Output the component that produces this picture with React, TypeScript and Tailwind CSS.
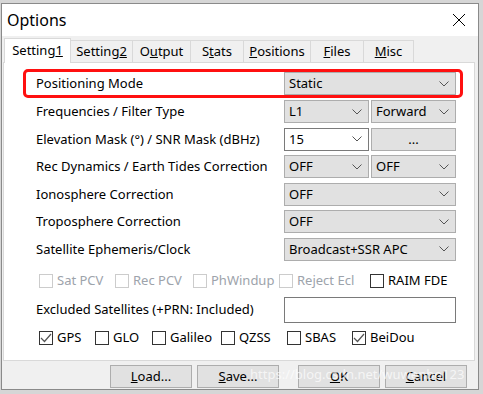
import React from 'react';

const FONT = { fontFamily: '"Noto Sans", "Open Sans", sans-serif' };

function Chevron() {
  return (
    <svg width="10" height="6" viewBox="0 0 10 6" className="shrink-0">
      <path d="M0.5 0.5 L5 5 L9.5 0.5" fill="none" stroke="#555" strokeWidth="1" />
    </svg>
  );
}

function Combo({ value, width, white }: { value: string; width: string; white?: boolean }) {
  return (
    <div
      className={`${width} h-[23px] flex items-center justify-between pl-[4px] pr-[6px] border ${
        white ? 'bg-white border-[#7a7a7a]' : 'bg-[#e1e1e1] border-[#adadad]'
      }`}
    >
      <span>{value}</span>
      <Chevron />
    </div>
  );
}

function Box({ checked, disabled }: { checked?: boolean; disabled?: boolean }) {
  return (
    <span
      className={`w-[14px] h-[14px] border flex items-center justify-center shrink-0 bg-white ${
        disabled ? 'border-[#cccccc]' : 'border-[#333]'
      }`}
    >
      {checked && (
        <svg width="12" height="10" viewBox="0 0 12 10">
          <path d="M1 5 L4.5 8.5 L11 1" fill="none" stroke="#555" strokeWidth="1.2" />
        </svg>
      )}
    </span>
  );
}

function Check({ label, x, checked, disabled }: { label: string; x: string; checked?: boolean; disabled?: boolean }) {
  return (
    <div className={`absolute top-0 ${x} flex items-center gap-[4px] ${disabled ? 'text-[#9da3ab]' : 'text-black'}`}>
      <Box checked={checked} disabled={disabled} />
      <span>{label}</span>
    </div>
  );
}

function Row({ label, children }: { label: string; children: React.ReactNode }) {
  return (
    <div className="h-[27.5px] flex items-center">
      <span className="w-[248px]">{label}</span>
      <div className="flex gap-[2px]">{children}</div>
    </div>
  );
}

function Btn({ children, className }: { children: React.ReactNode; className?: string }) {
  return (
    <div className={`w-[82px] h-[23px] bg-[#e1e1e1] border border-[#adadad] flex items-center justify-center ${className ?? ''}`}>
      {children}
    </div>
  );
}

const tabs = [
  { pre: 'Setting', key: '2', post: '', w: 'w-[62px]' },
  { pre: 'O', key: 'u', post: 'tput', w: 'w-[58px]' },
  { pre: 'S', key: 't', post: 'ats', w: 'w-[53px]' },
  { pre: '', key: 'P', post: 'ositions', w: 'w-[67px]' },
  { pre: '', key: 'F', post: 'iles', w: 'w-[53px]' },
  { pre: '', key: 'M', post: 'isc', w: 'w-[50px]' },
];

export default function App() {
  return (
    <div className="w-[483px] h-[394px] bg-[#d6d6d6] overflow-hidden text-[13px] text-black relative" style={FONT}>
      <div className="ml-[1px] mt-[3px] w-[478px] h-[387px] border border-[#8a8a8a] bg-[#f0f0f0] flex flex-col">
        {/* title bar */}
        <div className="h-[32px] bg-white flex items-center justify-between pl-[5px] pr-[12px] shrink-0">
          <span className="text-[16px]">Options</span>
          <svg width="14" height="14" viewBox="0 0 14 14">
            <path d="M1 1 L13 13 M13 1 L1 13" stroke="#000" strokeWidth="1" />
          </svg>
        </div>

        {/* tabs */}
        <div className="flex items-end pl-[2px] h-[25px] mt-[1px] shrink-0">
          <div className="w-[67px] h-[25px] bg-white border border-[#d9d9d9] border-b-0 flex items-center justify-center relative z-10 -mb-[1px]">
            Setting<span className="underline">1</span>
          </div>
          {tabs.map((t) => (
            <div key={t.pre + t.key} className={`${t.w} h-[22px] bg-[#f0f0f0] border border-[#d9d9d9] border-l-0 border-b-0 flex items-center justify-center`}>
              {t.pre}
              <span className="underline">{t.key}</span>
              {t.post}
            </div>
          ))}
        </div>

        {/* panel */}
        <div className="ml-[1px] w-[472px] h-[299px] bg-white border border-[#d9d9d9] pl-[32px] pt-[6px] shrink-0">
          <div className="-ml-[13px] w-[440px] h-[29px] border-[3px] border-[#ff1010] rounded-[5px] flex items-center pl-[10px] mb-[-1px]">
            <span className="w-[248px]">Positioning Mode</span>
            <Combo value="Static" width="w-[172px]" />
          </div>
          <div className="mt-[1px]">
            <Row label="Frequencies / Filter Type">
              <Combo value="L1" width="w-[85px]" />
              <Combo value="Forward" width="w-[85px]" />
            </Row>
            <Row label="Elevation Mask (°) / SNR Mask (dBHz)">
              <Combo value="15" width="w-[85px]" white />
              <Btn className="w-[85px]">...</Btn>
            </Row>
            <Row label="Rec Dynamics / Earth Tides Correction">
              <Combo value="OFF" width="w-[85px]" />
              <Combo value="OFF" width="w-[85px]" />
            </Row>
            <Row label="Ionosphere Correction">
              <Combo value="OFF" width="w-[172px]" />
            </Row>
            <Row label="Troposphere Correction">
              <Combo value="OFF" width="w-[172px]" />
            </Row>
            <Row label="Satellite Ephemeris/Clock">
              <Combo value="Broadcast+SSR APC" width="w-[172px]" />
            </Row>
          </div>

          <div className="relative h-[16px] mt-[8px] -ml-[32px]">
            <Check label="Sat PCV" x="left-[35px]" disabled />
            <Check label="Rec PCV" x="left-[111px]" disabled />
            <Check label="PhWindup" x="left-[189px]" disabled />
            <Check label="Reject Ecl" x="left-[275px]" disabled />
            <Check label="RAIM FDE" x="left-[366px]" />
          </div>

          <div className="h-[26px] flex items-center mt-[10px]">
            <span className="w-[248px]">Excluded Satellites (+PRN: Included)</span>
            <div className="w-[172px] h-[26px] bg-white border border-[#7a7a7a]" />
          </div>

          <div className="relative h-[16px] mt-[5px] -ml-[32px]">
            <Check label="GPS" x="left-[35px]" checked />
            <Check label="GLO" x="left-[91px]" />
            <Check label="Galileo" x="left-[148px]" />
            <Check label="QZSS" x="left-[217px]" />
            <Check label="SBAS" x="left-[283px]" />
            <Check label="BeiDou" x="left-[348px]" checked />
          </div>
        </div>

        {/* footer */}
        <div className="flex items-center pl-[108px] pt-[4px]">
          <Btn>
            <span className="underline">L</span>oad...
          </Btn>
          <Btn className="ml-[5px]">
            <span className="underline">S</span>ave...
          </Btn>
          <Btn className="ml-[19px]">
            <span className="underline">O</span>K
          </Btn>
          <Btn className="ml-[5px]">
            <span className="underline">C</span>ancel
          </Btn>
        </div>
      </div>

      {/* watermark */}
      <span className="absolute left-[250px] top-[365px] text-[13px] leading-[18px] text-white/70 pointer-events-none whitespace-nowrap">
        https://blog.csdn.net/wuwenbo123
      </span>
    </div>
  );
}
